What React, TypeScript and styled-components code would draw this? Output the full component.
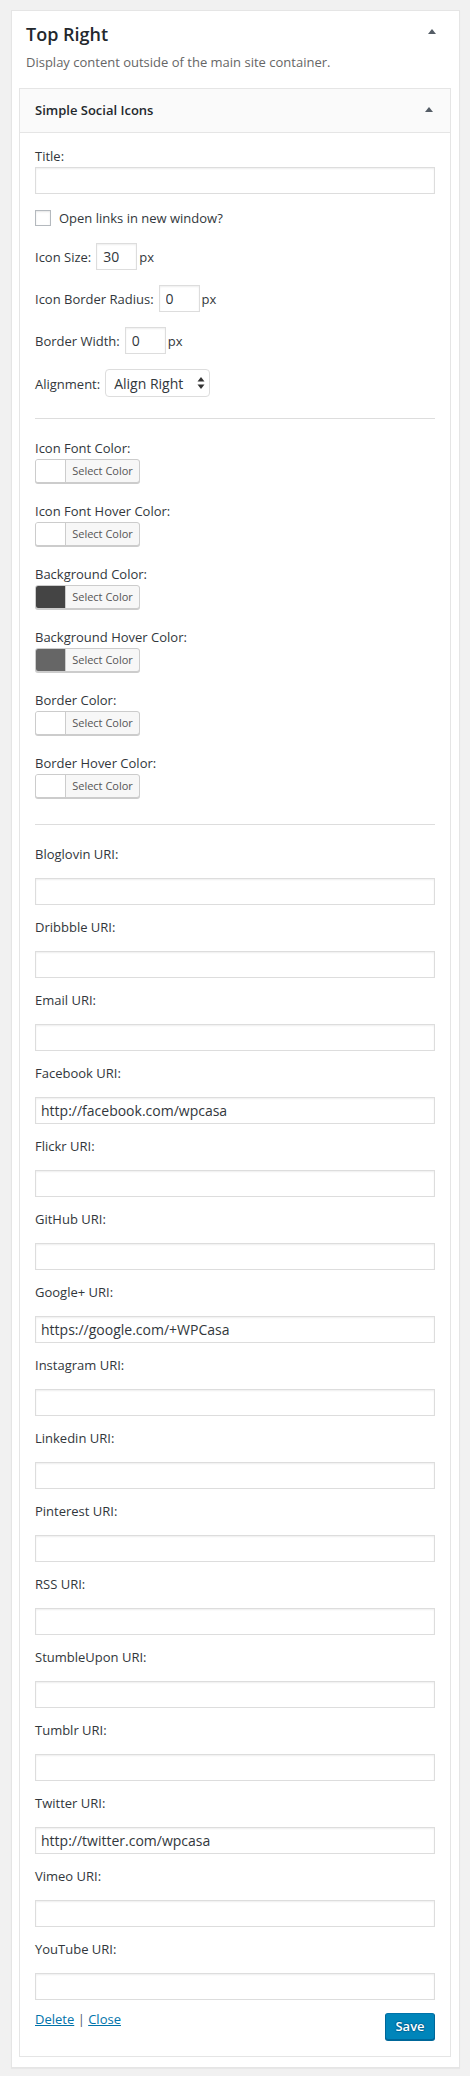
import React from 'react';
import styled, { createGlobalStyle } from 'styled-components';

const GlobalStyle = createGlobalStyle`
  html, body { margin: 0; padding: 0; }
  body {
    background: #f1f1f1;
    font-family: "Open Sans", "Noto Sans", sans-serif;
    color: #32373c;
    font-size: 13px;
    line-height: 18px;
  }
  * { box-sizing: border-box; }
`;

const Page = styled.div`
  padding: 10px 10px 10px 11px;
`;

const Sidebar = styled.section`
  background: #fff;
  border: 1px solid #e5e5e5;
  box-shadow: 0 1px 1px rgba(0, 0, 0, 0.04);
  padding: 0 8px 10px 7px;
`;

const SidebarHead = styled.div`
  display: flex;
  justify-content: space-between;
  align-items: flex-start;
  padding: 11px 15px 0 7px;
`;

const SidebarTitle = styled.h2`
  margin: 0;
  font-size: 18px;
  line-height: 24px;
  font-weight: 600;
  color: #23282d;
`;

const ArrowBox = styled.span<{ $top: number }>`
  display: flex;
  margin-top: ${(p) => p.$top}px;
  color: #555d66;
`;

const SidebarDesc = styled.p`
  margin: 7px 0 0;
  padding-left: 7px;
  color: #666;
  font-size: 13px;
  line-height: 18px;
`;

const Widget = styled.div`
  margin-top: 17px;
  border: 1px solid #e5e5e5;
  background: #fff;
`;

const WidgetTop = styled.div`
  height: 44px;
  display: flex;
  align-items: center;
  justify-content: space-between;
  padding: 0 17px 2px 15px;
  background: #fafafa;
  border-bottom: 1px solid #e5e5e5;
`;

const WidgetTitle = styled.h3`
  margin: 0;
  font-size: 13px;
  line-height: 18px;
  font-weight: 600;
  color: #23282d;
`;

const WidgetInside = styled.div`
  padding: 14px 15px 16px;
  display: flex;
  flex-direction: column;
`;

const Label = styled.label`
  display: block;
  font-size: 13px;
  line-height: 18px;
  color: #32373c;
`;

const TextInput = styled.input<{ $gap: number }>`
  display: block;
  width: 100%;
  height: 27px;
  margin-top: ${(p) => p.$gap}px;
  padding: 0 5px;
  border: 1px solid #ddd;
  border-radius: 0;
  box-shadow: inset 0 1px 2px rgba(0, 0, 0, 0.07);
  background: #fff;
  color: #32373c;
  font-family: "Open Sans", "Noto Sans", sans-serif;
  font-size: 14px;
  outline: none;
`;

const Block = styled.div<{ $mt: number }>`
  margin-top: ${(p) => p.$mt}px;
`;

const CheckRow = styled.label`
  margin-top: 15px;
  display: flex;
  align-items: center;
  gap: 8px;
  font-size: 13px;
  line-height: 18px;
`;

const CheckBox = styled.span`
  width: 16px;
  height: 16px;
  border: 1px solid #b4b9be;
  background: #fff;
  box-shadow: inset 0 1px 2px rgba(0, 0, 0, 0.1);
`;

const InlineRow = styled.div<{ $mt: number }>`
  margin-top: ${(p) => p.$mt}px;
  display: flex;
  align-items: baseline;
  font-size: 13px;
  line-height: 18px;
`;

const SmallInput = styled.input`
  width: 41px;
  height: 27px;
  margin-left: 5px;
  padding: 0 6px;
  border: 1px solid #ddd;
  box-shadow: inset 0 1px 2px rgba(0, 0, 0, 0.07);
  background: #fff;
  color: #32373c;
  font-family: "Open Sans", "Noto Sans", sans-serif;
  font-size: 14px;
  outline: none;
`;

const Unit = styled.span`
  margin-left: 2px;
`;

const SelectWrap = styled.span`
  position: relative;
  display: inline-flex;
  margin-left: 5px;
`;

const Select = styled.select`
  appearance: none;
  -webkit-appearance: none;
  width: 105px;
  height: 28px;
  padding: 0 20px 0 8px;
  border: 1px solid #ddd;
  border-radius: 4px;
  background: #fff;
  color: #32373c;
  font-family: "Open Sans", "Noto Sans", sans-serif;
  font-size: 14px;
  outline: none;
`;

const SelectArrows = styled.svg`
  position: absolute;
  right: 5px;
  top: 8px;
  pointer-events: none;
`;

const Rule = styled.hr<{ $mt: number }>`
  margin: ${(p) => p.$mt}px 0 0;
  border: 0;
  border-top: 1px solid #ddd;
  height: 0;
`;

const ColorButton = styled.div`
  margin-top: 2px;
  display: flex;
  width: 105px;
  height: 24px;
  border: 1px solid #ccc;
  border-radius: 3px;
  box-shadow: 0 1px 0 #ccc;
  background: #f7f7f7;
  overflow: hidden;
`;

const Swatch = styled.span<{ $color: string }>`
  width: 30px;
  background: ${(p) => p.$color};
  border-right: 1px solid #ccc;
`;

const SwatchText = styled.span`
  flex: 1;
  text-align: center;
  font-size: 11px;
  line-height: 22px;
  color: #555;
`;

const Actions = styled.div`
  margin-top: 10px;
  display: flex;
  justify-content: space-between;
  align-items: flex-start;
`;

const Links = styled.div`
  font-size: 13px;
  line-height: 18px;
  color: #555d66;
`;

const Link = styled.a`
  color: #0073aa;
  text-decoration: underline;
`;

const SaveButton = styled.button`
  margin-top: 3px;
  width: 50px;
  height: 27px;
  padding: 0;
  border: 1px solid;
  border-color: #0073aa #006799 #006799;
  border-radius: 3px;
  background: #0085ba;
  box-shadow: 0 1px 0 #006799;
  color: #fff;
  text-shadow: 0 -1px 1px #006799, 1px 0 1px #006799, 0 1px 1px #006799, -1px 0 1px #006799;
  font-family: "Open Sans", "Noto Sans", sans-serif;
  font-size: 13px;
  font-weight: 600;
  line-height: 25px;
`;

const UpArrow = () => (
  <svg width="8" height="5" viewBox="0 0 8 5">
    <path d="M4 0 L8 5 L0 5 Z" fill="currentColor" />
  </svg>
);

const colors: { label: string; color: string }[] = [
  { label: 'Icon Font Color:', color: '#ffffff' },
  { label: 'Icon Font Hover Color:', color: '#ffffff' },
  { label: 'Background Color:', color: '#444444' },
  { label: 'Background Hover Color:', color: '#666666' },
  { label: 'Border Color:', color: '#ffffff' },
  { label: 'Border Hover Color:', color: '#ffffff' },
];

const uris: { label: string; value: string }[] = [
  { label: 'Bloglovin URI:', value: '' },
  { label: 'Dribbble URI:', value: '' },
  { label: 'Email URI:', value: '' },
  { label: 'Facebook URI:', value: 'http://facebook.com/wpcasa' },
  { label: 'Flickr URI:', value: '' },
  { label: 'GitHub URI:', value: '' },
  { label: 'Google+ URI:', value: 'https://google.com/+WPCasa' },
  { label: 'Instagram URI:', value: '' },
  { label: 'Linkedin URI:', value: '' },
  { label: 'Pinterest URI:', value: '' },
  { label: 'RSS URI:', value: '' },
  { label: 'StumbleUpon URI:', value: '' },
  { label: 'Tumblr URI:', value: '' },
  { label: 'Twitter URI:', value: 'http://twitter.com/wpcasa' },
  { label: 'Vimeo URI:', value: '' },
  { label: 'YouTube URI:', value: '' },
];

export default function App() {
  return (
    <>
      <GlobalStyle />
      <Page>
        <Sidebar>
          <SidebarHead>
            <SidebarTitle>Top Right</SidebarTitle>
            <ArrowBox $top={7}>
              <UpArrow />
            </ArrowBox>
          </SidebarHead>
          <SidebarDesc>Display content outside of the main site container.</SidebarDesc>
          <Widget>
            <WidgetTop>
              <WidgetTitle>Simple Social Icons</WidgetTitle>
              <ArrowBox $top={0}>
                <UpArrow />
              </ArrowBox>
            </WidgetTop>
            <WidgetInside>
              <Block $mt={0}>
                <Label>Title:</Label>
                <TextInput $gap={2} defaultValue="" />
              </Block>
              <CheckRow>
                <CheckBox />
                Open links in new window?
              </CheckRow>
              <InlineRow $mt={16}>
                <span>Icon Size:</span>
                <SmallInput defaultValue="30" />
                <Unit>px</Unit>
              </InlineRow>
              <InlineRow $mt={15}>
                <span>Icon Border Radius:</span>
                <SmallInput defaultValue="0" />
                <Unit>px</Unit>
              </InlineRow>
              <InlineRow $mt={15}>
                <span>Border Width:</span>
                <SmallInput defaultValue="0" />
                <Unit>px</Unit>
              </InlineRow>
              <InlineRow $mt={15}>
                <span>Alignment:</span>
                <SelectWrap>
                  <Select defaultValue="right">
                    <option value="left">Align Left</option>
                    <option value="center">Align Center</option>
                    <option value="right">Align Right</option>
                  </Select>
                  <SelectArrows width="8" height="12" viewBox="0 0 8 12">
                    <path d="M4 0 L7.5 4.5 L0.5 4.5 Z" fill="#333" />
                    <path d="M4 12 L7.5 7.5 L0.5 7.5 Z" fill="#333" />
                  </SelectArrows>
                </SelectWrap>
              </InlineRow>
              <Rule $mt={21} />
              {colors.map((c, i) => (
                <Block key={c.label} $mt={i === 0 ? 20 : 19}>
                  <Label>{c.label}</Label>
                  <ColorButton>
                    <Swatch $color={c.color} />
                    <SwatchText>Select Color</SwatchText>
                  </ColorButton>
                </Block>
              ))}
              <Rule $mt={26} />
              {uris.map((u, i) => (
                <Block key={u.label} $mt={i === 0 ? 20 : 13}>
                  <Label>{u.label}</Label>
                  <TextInput $gap={15} defaultValue={u.value} />
                </Block>
              ))}
              <Actions>
                <Links>
                  <Link href="#">Delete</Link> | <Link href="#">Close</Link>
                </Links>
                <SaveButton type="button">Save</SaveButton>
              </Actions>
            </WidgetInside>
          </Widget>
        </Sidebar>
      </Page>
    </>
  );
}
